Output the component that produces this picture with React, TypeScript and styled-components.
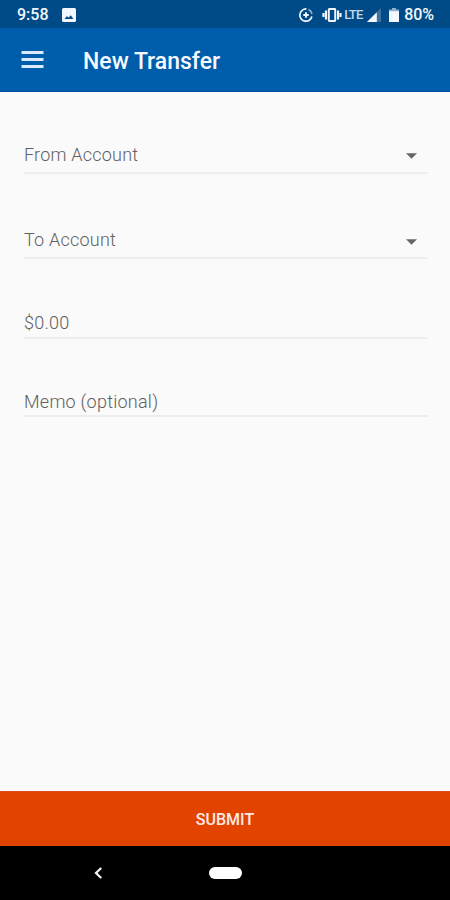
import React from "react";
import styled, { createGlobalStyle } from "styled-components";

const GlobalStyle = createGlobalStyle`
  * { box-sizing: border-box; }
  html, body { margin: 0; padding: 0; }
  body { font-family: Roboto, sans-serif; background: #fafafa; }
`;

const Screen = styled.div`
  width: 450px;
  height: 900px;
  display: flex;
  flex-direction: column;
  background: #fafafa;
  overflow: hidden;
`;

const StatusBar = styled.div`
  height: 28px;
  flex: none;
  display: flex;
  align-items: center;
  justify-content: space-between;
  padding: 2px 16px 0 17px;
  background: #004b87;
  color: #f3f8ff;
`;

const StatusGroup = styled.div`
  display: flex;
  align-items: center;
`;

const StatusText = styled.span`
  font-size: 16px;
  font-weight: 500;
  line-height: 20px;
`;

const NetworkLabel = styled.span`
  width: 20px;
  margin-left: 2px;
  font-size: 13px;
  font-weight: 500;
  line-height: 20px;
  letter-spacing: -0.9px;
  color: #c6d8ea;
  white-space: nowrap;
`;

const BatteryLabel = styled(StatusText)`
  margin-left: 5px;
  letter-spacing: -0.1px;
`;

const Icon = styled.svg<{ $left?: number }>`
  display: block;
  flex: none;
  margin-left: ${(p) => p.$left ?? 0}px;
`;

const AppBar = styled.header`
  height: 64px;
  flex: none;
  display: flex;
  align-items: center;
  gap: 39px;
  padding: 0 22px 0 21px;
  background: #005dab;
  border-bottom: 1px solid #004c9c;
`;

const IconButton = styled.button`
  display: flex;
  padding: 0;
  border: 0;
  background: none;
  color: #dceaff;
`;

const Title = styled.h1`
  margin: 5px 0 0;
  font-size: 23px;
  line-height: 28px;
  font-weight: 500;
  color: #f5f9ff;
`;

const Form = styled.main`
  flex: 1;
  padding: 39px 22px 0 24px;
`;

const Field = styled.div<{ $gap?: number }>`
  height: 43px;
  margin-bottom: ${(p) => p.$gap ?? 0}px;
  display: flex;
  align-items: flex-end;
  justify-content: space-between;
  border-bottom: 2px solid #eeeeee;
  padding: 0 11px 0 0;
`;

const Label = styled.span<{ $bottom: number; $spacing: number }>`
  font-size: 18px;
  line-height: 22px;
  font-weight: 300;
  color: #606060;
  letter-spacing: ${(p) => p.$spacing}px;
  margin-bottom: ${(p) => p.$bottom}px;
`;

const Caret = styled.svg<{ $bottom: number }>`
  display: block;
  margin-bottom: ${(p) => p.$bottom}px;
`;

const Submit = styled.button`
  height: 55px;
  flex: none;
  border: 0;
  border-top: 1px solid #dc4a20;
  padding: 2px 0 0;
  background: #e24400;
  color: #ffe9e4;
  font: 500 16px/20px Roboto, sans-serif;
`;

const NavBar = styled.nav`
  height: 54px;
  flex: none;
  display: grid;
  grid-template-columns: 94px 115px 33px;
  align-items: center;
  background: #000;
`;

const BackButton = styled(IconButton)`
  grid-column: 2;
`;

const HomePill = styled.div`
  width: 33px;
  height: 12px;
  border-radius: 6px;
  background: #fff;
`;

const DropdownCaret = ({ bottom }: { bottom: number }) => (
  <Caret $bottom={bottom} width="11" height="6" viewBox="0 0 11 6">
    <path d="M0 .3H11L5.500 5.800Z" fill="#666" />
  </Caret>
);

export default function App() {
  return (
    <>
      <GlobalStyle />
      <Screen>
        <StatusBar>
          <StatusGroup>
            <StatusText>9:58</StatusText>
            <Icon $left={13} width="14" height="14" viewBox="0 0 14 14">
              <path
                fillRule="evenodd"
                fill="currentColor"
                d="M1.500 0h11A1.500 1.500 0 0 1 14 1.500v11a1.500 1.500 0 0 1-1.500 1.500h-11A1.500 1.500 0 0 1 0 12.500v-11A1.500 1.500 0 0 1 1.500 0zM2.500 11h9L8.700 7.200 6.500 9.800 5 8z"
              />
            </Icon>
          </StatusGroup>
          <StatusGroup>
            <Icon width="14" height="14" viewBox="0 0 14 14" fill="none" stroke="currentColor">
              <path d="M7.500 1A6.100 6.100 0 1 0 12.900 8.500" strokeWidth="1.700" />
              <path d="M9.500 1.500A6.100 6.100 0 0 1 13 6.200" strokeWidth="1.400" opacity="0.6" />
              <path d="M7 4.300v5.400M4.300 7h5.400" strokeWidth="1.900" />
            </Icon>
            <Icon $left={9} width="20" height="14" viewBox="0 0 20 14" fill="none" stroke="currentColor">
              <rect x="6.800" y="1" width="6.400" height="12" rx="0.500" strokeWidth="1.900" />
              <path d="M4 2.500v9M16 2.500v9" strokeWidth="2.200" />
              <path d="M1.500 5v4M18.500 5v4" strokeWidth="2.200" />
            </Icon>
            <NetworkLabel>LTE</NetworkLabel>
            <Icon $left={2} width="15" height="14" viewBox="0 0 15 14">
              <path d="M15 0V14H1Z" fill="#3b719f" />
              <path d="M10.800 4.200V14H1Z" fill="currentColor" />
            </Icon>
            <Icon $left={8} width="10" height="14" viewBox="0 0 10 14">
              <path d="M3 0h4v1.500h3V14H0V1.500h3z" fill="#8fb1ce" />
              <path d="M0 3.200h10V14H0z" fill="currentColor" />
            </Icon>
            <BatteryLabel>80%</BatteryLabel>
          </StatusGroup>
        </StatusBar>
        <AppBar>
          <IconButton aria-label="Menu">
            <Icon width="23" height="17" viewBox="0 0 23 17">
              <path d="M.5 0h22v3H.5zM.5 7h22v3H.5zM.5 14h22v3H.5z" fill="currentColor" />
            </Icon>
          </IconButton>
          <Title>New Transfer</Title>
        </AppBar>
        <Form>
          <Field $gap={42}>
            <Label $bottom={6} $spacing={0.22}>From Account</Label>
            <DropdownCaret bottom={13} />
          </Field>
          <Field $gap={37}>
            <Label $bottom={6} $spacing={0.22}>To Account</Label>
            <DropdownCaret bottom={12} />
          </Field>
          <Field $gap={35}>
            <Label $bottom={3} $spacing={0.25}>$0.00</Label>
          </Field>
          <Field>
            <Label $bottom={2} $spacing={0.25}>Memo (optional)</Label>
          </Field>
        </Form>
        <Submit>SUBMIT</Submit>
        <NavBar>
          <BackButton aria-label="Back">
            <Icon width="9" height="12" viewBox="0 0 9 12">
              <path d="M7.200 1L2 6l5.200 5" fill="none" stroke="#f2f2f2" strokeWidth="2.300" />
            </Icon>
          </BackButton>
          <HomePill />
        </NavBar>
      </Screen>
    </>
  );
}
